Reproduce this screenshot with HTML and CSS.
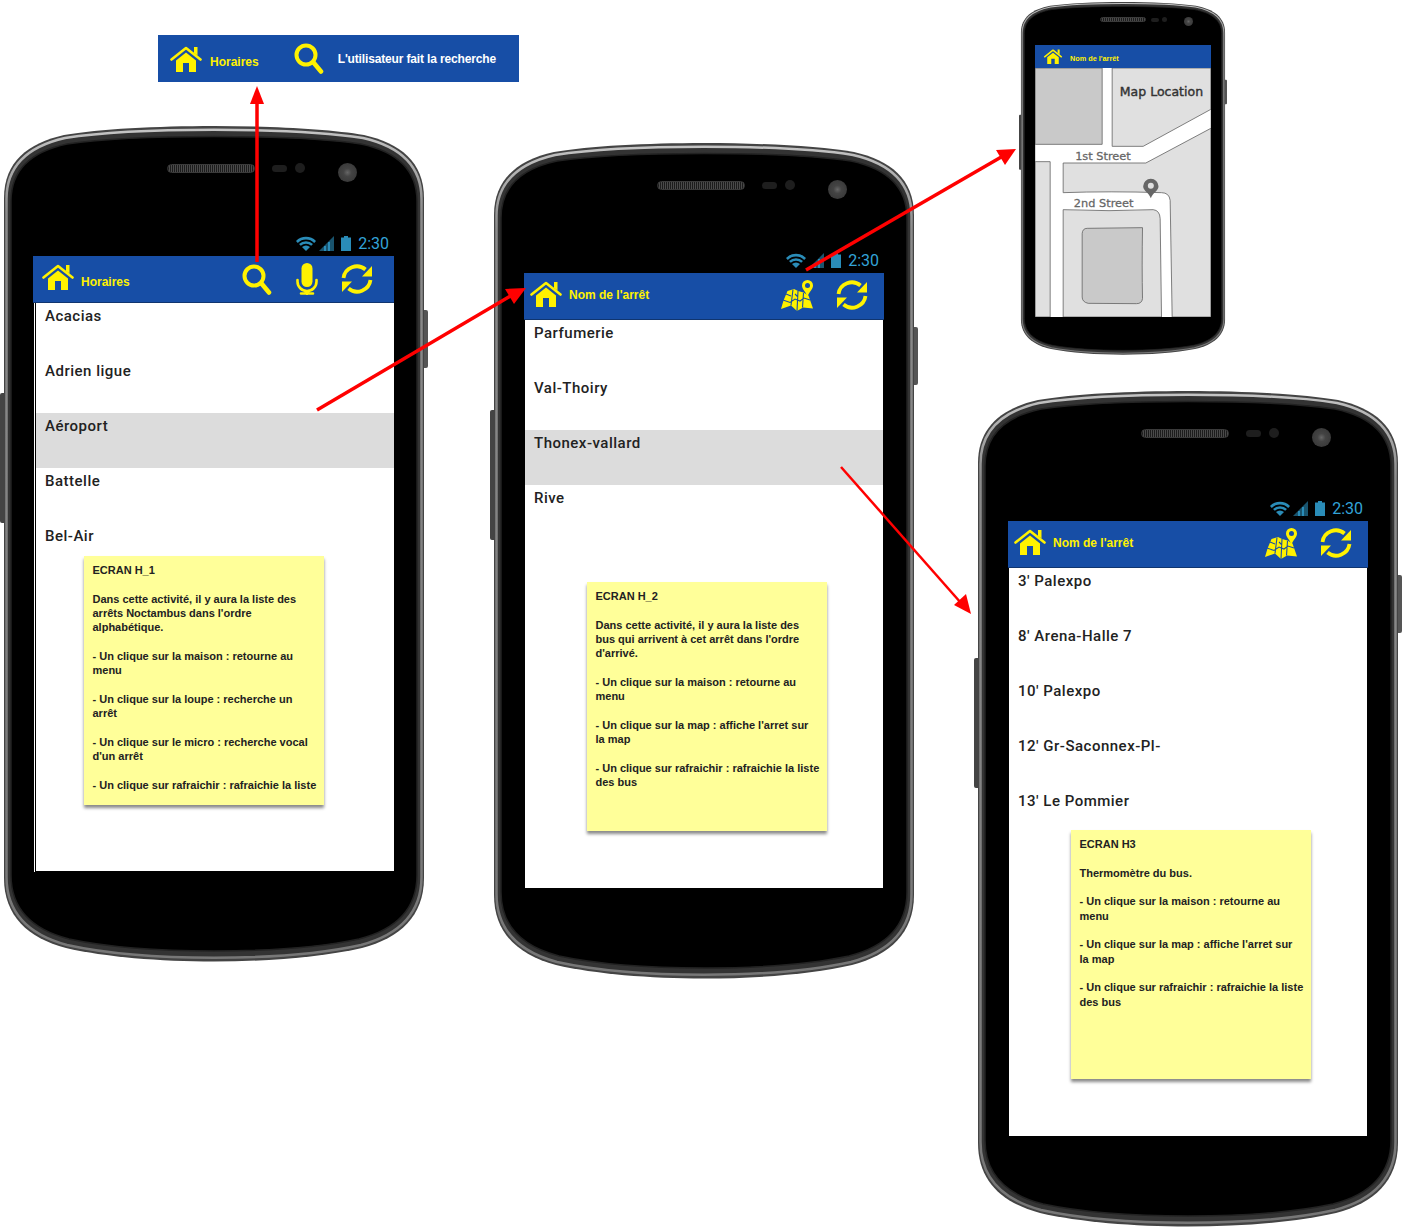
FILE: index.html
```html
<!DOCTYPE html>
<html lang="fr">
<head>
    <meta charset="UTF-8">
    <meta name="viewport" content="width=device-width, initial-scale=1.0">
    <title>Maquettes Noctambus</title>
    <link rel="stylesheet" href="styles.css">
</head>
<body>
    <!-- Icones et corps du telephone, reutilises partout -->
    <svg class="defs" width="0" height="0" aria-hidden="true">
        <defs>
            <linearGradient id="rim" x1="0" y1="0" x2="0" y2="1">
                <stop offset="0" stop-color="#c4c4c4"/>
                <stop offset="0.1" stop-color="#8c8c8c"/>
                <stop offset="1" stop-color="#777"/>
            </linearGradient>
        </defs>
        <symbol id="i-phone" viewBox="-4 0 428 836" preserveAspectRatio="none">
            <rect x="-4" y="267" width="8" height="130" rx="2" fill="#444"/>
            <rect x="416" y="184" width="8" height="58" rx="2" fill="#555"/>
            <path d="M0 72C0 36 24 17 60 9C130-3 290-3 360 9C396 17 420 36 420 72V752C420 790 396 812 358 822C280 840 140 840 62 822C24 812 0 790 0 752Z" fill="#444"/>
            <path d="M2.500 73C2.500 38 26 20 61 12C130 1 290 1 359 12C394 20 417.500 38 417.500 73V751C417.500 788 394 809 357 819C280 836 140 836 63 819C26 809 2.500 788 2.500 751Z" fill="#333" stroke="url(#rim)" stroke-width="2.500"/>
            <path d="M7 75C7 42 30 25 63 18C130 8 290 8 357 18C390 25 413 42 413 75V749C413 784 390 804 355 813C280 829 140 829 65 813C30 804 7 784 7 749Z" fill="#000" stroke="#222" stroke-width="1.500"/>
        </symbol>
        <symbol id="i-home" viewBox="0 0 32 26">
            <path d="M24 1h3.500v8.500L24 7Z" fill="currentColor"/>
            <path d="M1.500 13.500 16 2l14.500 11.500" fill="none" stroke="currentColor" stroke-width="2.600" stroke-linecap="round" stroke-linejoin="round"/>
            <path d="M6 14.500 16 6.500l10 8V26h-7v-9h-6v9H6Z" fill="currentColor"/>
        </symbol>
        <symbol id="i-search" viewBox="0 0 30 31">
            <circle cx="12" cy="12" r="9.500" fill="none" stroke="currentColor" stroke-width="4"/>
            <path d="M19.500 19.500 27 28.500" stroke="currentColor" stroke-width="4.600" stroke-linecap="round"/>
        </symbol>
        <symbol id="i-mic" viewBox="0 0 22 32">
            <rect x="5.500" y="0" width="11" height="24" rx="5.500" fill="currentColor"/>
            <path d="M1.500 17v1.500a9.500 9.500 0 0 0 19 0V17M11 28v3M5 30.500h12" fill="none" stroke="currentColor" stroke-width="2.600" stroke-linecap="round"/>
        </symbol>
        <symbol id="i-refresh" viewBox="0 0 32 32">
            <path d="M2.500 15A13.500 13.500 0 0 1 24.500 6.500" fill="none" stroke="currentColor" stroke-width="3.800"/>
            <path d="M31 3v10.500H21Z" fill="currentColor"/>
            <path d="M29.500 17A13.500 13.500 0 0 1 7.500 25.500" fill="none" stroke="currentColor" stroke-width="3.800"/>
            <path d="M1 29V18.500h10Z" fill="currentColor"/>
        </symbol>
        <symbol id="i-map" viewBox="0 0 32 31">
            <path d="M6.500 11 13 9l4 2 5.500 1.500 5 3L32 28.500l-10-1-6 3.500-6-5.500L0 29l2.500-8.500Z" fill="currentColor"/>
            <path d="M12 9.500 10 25.500M17 11l-1 20M22.500 13l-1 14.500M2 20l7 2.500 5-3.500 5 2 4-3 6 2M5 14l5 2M14 14l3 3" fill="none" stroke="#174ea6" stroke-width="1.100"/>
            <path d="M26.500 0a5.500 5.500 0 0 1 5.500 5.500c0 4-4 6-5.500 11.500-1.500-5.500-5.500-7.500-5.500-11.500A5.500 5.500 0 0 1 26.500 0Z" fill="currentColor"/>
            <circle cx="26.500" cy="5.500" r="2.500" fill="#174ea6"/>
        </symbol>
        <symbol id="i-wifi" viewBox="0 0 20 15">
            <path d="M0 5a14 14 0 0 1 20 0l-1.800 1.900a11.500 11.500 0 0 0-16.400 0Z" fill="currentColor"/>
            <path d="M3 8a10 10 0 0 1 14 0l-1.800 1.800a7.500 7.500 0 0 0-10.400 0Z" fill="currentColor"/>
            <path d="M6 11a6 6 0 0 1 8 0l-4 4Z" fill="currentColor"/>
        </symbol>
        <symbol id="i-signal" viewBox="0 0 15 15">
            <path d="M0 15 15 0v15Z" fill="currentColor" opacity="0.600"/>
            <path d="M5 10h2v5H5ZM9 6h2v9H9Z" fill="currentColor"/>
        </symbol>
        <symbol id="i-battery" viewBox="0 0 10 15">
            <path d="M3 0h4v1.500h3V15H0V1.500h3Z" fill="currentColor"/>
        </symbol>
    </svg>

    <!-- Bandeau en haut -->
    <div class="legend">
        <svg class="ic-home"><use href="#i-home"/></svg>
        <span class="legend-title">Horaires</span>
        <svg class="ic-search"><use href="#i-search"/></svg>
        <span class="legend-text">L'utilisateur fait la recherche</span>
    </div>

    <!-- Ecran H_1 -->
    <div class="phone phone-h1">
        <svg class="phone-body"><use href="#i-phone"/></svg>
        <div class="speaker"></div>
        <div class="sensor"></div>
        <div class="sensor-dot"></div>
        <div class="camera"></div>
        <div class="status">
            <svg class="ic-wifi"><use href="#i-wifi"/></svg>
            <svg class="ic-signal"><use href="#i-signal"/></svg>
            <svg class="ic-battery"><use href="#i-battery"/></svg>
            <span class="clock">2:30</span>
        </div>
        <div class="bar">
            <svg class="ic-home"><use href="#i-home"/></svg>
            <span class="bar-title">Horaires</span>
            <svg class="ic-search bar-end"><use href="#i-search"/></svg>
            <svg class="ic-mic"><use href="#i-mic"/></svg>
            <svg class="ic-refresh"><use href="#i-refresh"/></svg>
        </div>
        <ul class="list list-inset">
            <li>Acacias</li>
            <li>Adrien ligue</li>
            <li class="selected">Aéroport</li>
            <li>Battelle</li>
            <li>Bel-Air</li>
        </ul>
        <div class="note note-h1">
            <p>ECRAN H_1</p>
            <p>Dans cette activité, il y aura la liste des arrêts Noctambus dans l'ordre alphabétique.</p>
            <p>- Un clique sur la maison : retourne au menu</p>
            <p>- Un clique sur la loupe : recherche un arrêt</p>
            <p>- Un clique sur le micro : recherche vocal d'un arrêt</p>
            <p>- Un clique sur rafraichir : rafraichie la liste</p>
        </div>
    </div>

    <!-- Ecran H_2 -->
    <div class="phone phone-h2">
        <svg class="phone-body"><use href="#i-phone"/></svg>
        <div class="speaker"></div>
        <div class="sensor"></div>
        <div class="sensor-dot"></div>
        <div class="camera"></div>
        <div class="status">
            <svg class="ic-wifi"><use href="#i-wifi"/></svg>
            <svg class="ic-signal"><use href="#i-signal"/></svg>
            <svg class="ic-battery"><use href="#i-battery"/></svg>
            <span class="clock">2:30</span>
        </div>
        <div class="bar">
            <svg class="ic-home"><use href="#i-home"/></svg>
            <span class="bar-title">Nom de l'arrêt</span>
            <svg class="ic-map bar-end"><use href="#i-map"/></svg>
            <svg class="ic-refresh"><use href="#i-refresh"/></svg>
        </div>
        <ul class="list">
            <li>Parfumerie</li>
            <li>Val-Thoiry</li>
            <li class="selected">Thonex-vallard</li>
            <li>Rive</li>
        </ul>
        <div class="note note-h2">
            <p>ECRAN H_2</p>
            <p>Dans cette activité, il y aura la liste des bus qui arrivent à cet arrêt dans l'ordre d'arrivé.</p>
            <p>- Un clique sur la maison : retourne au menu</p>
            <p>- Un clique sur la map : affiche l'arret sur la map</p>
            <p>- Un clique sur rafraichir : rafraichie la liste des bus</p>
        </div>
    </div>

    <!-- Ecran H3 -->
    <div class="phone phone-h3">
        <svg class="phone-body"><use href="#i-phone"/></svg>
        <div class="speaker"></div>
        <div class="sensor"></div>
        <div class="sensor-dot"></div>
        <div class="camera"></div>
        <div class="status">
            <svg class="ic-wifi"><use href="#i-wifi"/></svg>
            <svg class="ic-signal"><use href="#i-signal"/></svg>
            <svg class="ic-battery"><use href="#i-battery"/></svg>
            <span class="clock">2:30</span>
        </div>
        <div class="bar">
            <svg class="ic-home"><use href="#i-home"/></svg>
            <span class="bar-title">Nom de l'arrêt</span>
            <svg class="ic-map bar-end"><use href="#i-map"/></svg>
            <svg class="ic-refresh"><use href="#i-refresh"/></svg>
        </div>
        <ul class="list">
            <li>3' Palexpo</li>
            <li>8' Arena-Halle 7</li>
            <li>10' Palexpo</li>
            <li>12' Gr-Saconnex-Pl-</li>
            <li>13' Le Pommier</li>
        </ul>
        <div class="note note-h3">
            <p>ECRAN H3</p>
            <p>Thermomètre du bus.</p>
            <p>- Un clique sur la maison : retourne au menu</p>
            <p>- Un clique sur la map : affiche l'arret sur la map</p>
            <p>- Un clique sur rafraichir : rafraichie la liste des bus</p>
        </div>
    </div>

    <!-- Petit telephone avec la carte -->
    <div class="phone phone-map">
        <svg class="phone-body"><use href="#i-phone"/></svg>
        <div class="speaker"></div>
        <div class="sensor"></div>
        <div class="sensor-dot"></div>
        <div class="camera"></div>
        <div class="bar">
            <svg class="ic-home"><use href="#i-home"/></svg>
            <span class="bar-title">Nom de l'arrêt</span>
        </div>
        <svg class="map" viewBox="76 203 527 747">
            <rect x="76" y="203" width="527" height="747" fill="#fff"/>
            <g stroke="#666" stroke-width="2.500">
                <path d="M76 203H277V432H76Z" fill="#c9c9c9"/>
                <path d="M307 203H603V327L400 438H307Z" fill="#e0e0e0"/>
                <path d="M76 484H121V950H76Z" fill="#e0e0e0"/>
                <path d="M160 577V488H408L603 384V950H487L481 600Q478 577 455 577Q300 572 160 577Z" fill="#e0e0e0"/>
                <path d="M160 950V628Q300 634 430 628Q450 630 451 655L455 950Z" fill="#e0e0e0"/>
                <path d="M217 700Q218 684 232 684L398 682Q396 800 398 895Q396 910 380 910L235 909Q217 905 217 890Z" fill="#c9c9c9"/>
            </g>
            <path d="M423 535a23 23 0 0 1 23 23c0 14-18 20-23 36-5-16-23-22-23-36a23 23 0 0 1 23-23Z" fill="#666"/>
            <circle cx="423" cy="556" r="9" fill="#e0e0e0"/>
            <text class="map-title" x="330" y="288">Map Location</text>
            <text class="map-street" x="196" y="478">1st Street</text>
            <text class="map-street" x="192" y="619">2nd Street</text>
        </svg>
    </div>

    <!-- Fleches entre les ecrans -->
    <svg class="arrows" viewBox="0 0 1404 1231">
        <g stroke="#f00" fill="none">
            <path d="M257 262V100" stroke-width="3.500"/>
            <path d="M317 410 512 295" stroke-width="3.500"/>
            <path d="M806 270 1003 156" stroke-width="3.500"/>
            <path d="M841 467 961 603" stroke-width="2.500"/>
        </g>
        <g fill="#f00">
            <path d="M257 86 264 104H250Z"/>
            <path d="M526 288 514 304 505 289Z"/>
            <path d="M1016 149 1005 165 996 150Z"/>
            <path d="M971 614 954 605 966 594Z"/>
        </g>
    </svg>
</body>
</html>
```

FILE: styles.css
```css
html, body {
    margin: 0;
    padding: 0;
}
body {
    position: relative;
    width: 1404px;
    height: 1231px;
    overflow: hidden;
    background: #fff;
    font-family: "Liberation Sans", Arial, sans-serif;
}
.defs {
    position: absolute;
}
.legend {
    position: absolute;
    left: 158px;
    top: 35px;
    width: 361px;
    height: 47px;
    box-sizing: border-box;
    padding-left: 12px;
    display: flex;
    align-items: center;
    background: #174ea6;
    color: #fff200;
}
.legend-title {
    margin-left: 8px;
    font-size: 12px;
    font-weight: bold;
    margin-top: 7px;
}
.legend .ic-search {
    margin-left: 35px;
}
.legend-text {
    margin-left: 14px;
    font-size: 12px;
    font-weight: bold;
    letter-spacing: -0.150px;
    color: #fff;
}

/* telephones */
.phone {
    position: absolute;
    width: 420px;
    height: 836px;
    box-sizing: border-box;
    padding: 109px 30px 0 30px;
}
.phone-h1 { left: 4px; top: 126px; padding-left: 29px; }
.phone-h2 { left: 494px; top: 143px; }
.phone-h3 { left: 978px; top: 391px; }
.phone-body {
    position: absolute;
    left: -4px;
    top: 0;
    width: 428px;
    height: 836px;
}
.speaker {
    position: absolute;
    left: 163px;
    top: 38px;
    width: 88px;
    height: 9px;
    border-radius: 5px;
    background: repeating-linear-gradient(90deg, #1c1c1c 0 1px, #4a4a4a 1px 2px);
    border: 1px solid #3a3a3a;
    box-sizing: border-box;
}
.sensor {
    position: absolute;
    left: 268px;
    top: 39px;
    width: 15px;
    height: 7px;
    border-radius: 4px;
    background: #1e1e1e;
}
.sensor-dot {
    position: absolute;
    left: 291px;
    top: 37px;
    width: 10px;
    height: 10px;
    border-radius: 50%;
    background: #1e1e1e;
}
.camera {
    position: absolute;
    left: 334px;
    top: 37px;
    width: 19px;
    height: 19px;
    border-radius: 50%;
    background: radial-gradient(circle, #666 0, #444 30%, #333 100%);
}
.status {
    position: relative;
    height: 21px;
    box-sizing: border-box;
    padding: 0 5px 4px 0;
    display: flex;
    align-items: center;
    justify-content: flex-end;
    color: #2a8cb8;
}
.ic-wifi {
    width: 20px;
    height: 15px;
    margin-right: 3px;
}
.ic-signal {
    width: 15px;
    height: 15px;
    margin-right: 7px;
}
.ic-battery {
    width: 10px;
    height: 15px;
    margin-right: 7px;
}
.clock {
    font-family: Roboto, sans-serif;
    font-size: 16px;
    color: #33a3d8;
}
.bar {
    position: relative;
    height: 47px;
    box-sizing: border-box;
    padding: 0 16px 0 6px;
    display: flex;
    align-items: center;
    background: #174ea6;
    border-bottom: 1px solid #10356f;
    color: #fff200;
}
.phone-h1 .bar {
    padding: 0 21px 0 9px;
}
.phone-h1 .bar-title {
    margin-top: 5px;
}
.bar .ic-home {
    margin-top: -4px;
}
.bar-title {
    margin: -2px 0 0 7px;
    font-size: 12px;
    font-weight: bold;
}
.bar-end {
    margin-left: auto;
}
.ic-home {
    width: 32px;
    height: 26px;
    flex: none;
}
.ic-search {
    width: 30px;
    height: 31px;
    flex: none;
}
.ic-mic {
    width: 22px;
    height: 32px;
    margin-left: 24px;
    flex: none;
}
.ic-refresh {
    width: 32px;
    height: 32px;
    margin-left: 23px;
    flex: none;
}
.ic-map {
    width: 32px;
    height: 31px;
    flex: none;
}
.phone-h2 .ic-refresh,
.phone-h3 .ic-refresh,
.ic-map {
    margin-top: -2px;
}
.list {
    position: relative;
    list-style: none;
    margin: 0 1px;
    padding: 0;
    height: 568px;
    background: #fff;
}
.list-inset {
    margin: 0 0 0 3px;
}
.list-inset::before {
    content: "";
    position: absolute;
    left: -2px;
    top: 0;
    bottom: -1px;
    width: 1px;
    background: #fff;
}
.list li {
    height: 55px;
    box-sizing: border-box;
    padding: 4px 0 0 9px;
    font-family: Roboto, sans-serif;
    font-size: 15px;
    font-weight: 500;
    line-height: 18px;
    letter-spacing: 0.500px;
    color: #222;
}
.list .selected {
    background: #dcdcdc;
}

/* post-it */
.note {
    position: absolute;
    width: 240px;
    height: 249px;
    box-sizing: border-box;
    padding: 7px 7px 0 8.500px;
    background: #ffff99;
    box-shadow: 0 3px 3px #8a8a8a;
    font-size: 11px;
    font-weight: bold;
    line-height: 14.350px;
    color: #222;
}
.note p {
    margin: 0 0 14.350px;
}
.note-h1 { left: 80px; top: 430px; }
.note-h2 { left: 93px; top: 439px; }
.note-h3 { left: 93px; top: 439px; }

/* petit telephone */
.phone-map {
    left: 1021px;
    top: 2px;
    width: 204px;
    height: 353px;
    padding: 43px 14px 0 14px;
}
.phone-map .phone-body {
    left: -2px;
    width: 208px;
    height: 353px;
}
.phone-map .speaker {
    left: 79px;
    top: 15px;
    width: 46px;
    height: 5px;
}
.phone-map .sensor {
    left: 130px;
    top: 16px;
    width: 8px;
    height: 4px;
}
.phone-map .sensor-dot {
    left: 141px;
    top: 15px;
    width: 5px;
    height: 5px;
}
.phone-map .camera {
    left: 163px;
    top: 15px;
    width: 9px;
    height: 9px;
}
.phone-map .bar {
    height: 23px;
    padding: 0 0 0 6px;
    border-bottom: 0;
}
.phone-map .ic-home {
    width: 24px;
    height: 15px;
    margin-top: 0;
}
.phone-map .bar-title {
    margin: 3px 0 0 5px;
    font-size: 7.300px;
}
.map {
    position: relative;
    display: block;
    width: 176px;
    height: 249px;
}
.map-title {
    font-family: "DejaVu Sans", cursive;
    font-size: 37.500px;
    fill: #333;
    stroke: #333;
    stroke-width: 1.200px;
}
.map-street {
    font-family: "DejaVu Sans", cursive;
    font-size: 34px;
    fill: #666;
    stroke: #666;
    stroke-width: 0.800px;
}

.arrows {
    position: absolute;
    left: 0;
    top: 0;
    width: 1404px;
    height: 1231px;
    pointer-events: none;
}
```
